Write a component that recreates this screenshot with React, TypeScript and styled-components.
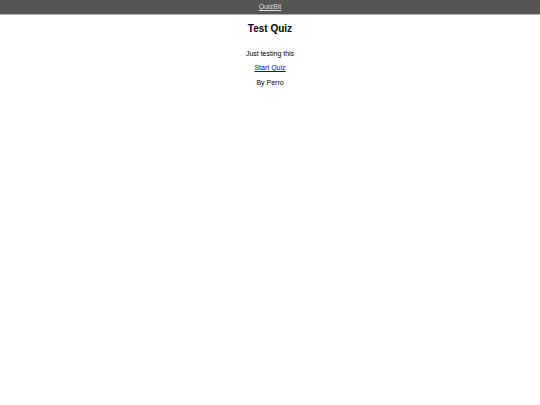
import React from "react";
import styled, { createGlobalStyle } from "styled-components";

const GlobalStyle = createGlobalStyle`
  body {
    margin: 0;
    background: #ffffff;
    font-family: "Liberation Sans", Arial, sans-serif;
  }
`;

const TopBar = styled.nav`
  height: 14px;
  background-color: #555555;
  border-bottom: 1px solid #b0b0b0;
  display: flex;
  align-items: center;
  justify-content: center;
`;

const BrandLink = styled.a`
  color: #dddddd;
  font-size: 7px;
  line-height: 8px;
  text-decoration: underline;
`;

const Main = styled.main`
  display: flex;
  flex-direction: column;
  align-items: center;
  text-align: center;
  padding-top: 8px;
`;

const Title = styled.h1`
  margin: 0 0 14.5px 0;
  font-size: 10px;
  line-height: 12px;
  font-weight: bold;
  color: #000;
`;

const Line = styled.p`
  margin: 0 0 6.5px 0;
  font-size: 7px;
  line-height: 8px;
  color: #000;
`;

const StartLink = styled.a`
  color: #0000ee;
  text-decoration: underline;
`;

export default function App() {
  return (
    <>
      <GlobalStyle />
      <TopBar>
        <BrandLink href="/">QuizBit</BrandLink>
      </TopBar>
      <Main>
        <Title>Test Quiz</Title>
        <Line>Just testing this</Line>
        <Line>
          <StartLink href="/quiz">Start Quiz</StartLink>
        </Line>
        <Line>By Perro</Line>
      </Main>
    </>
  );
}
